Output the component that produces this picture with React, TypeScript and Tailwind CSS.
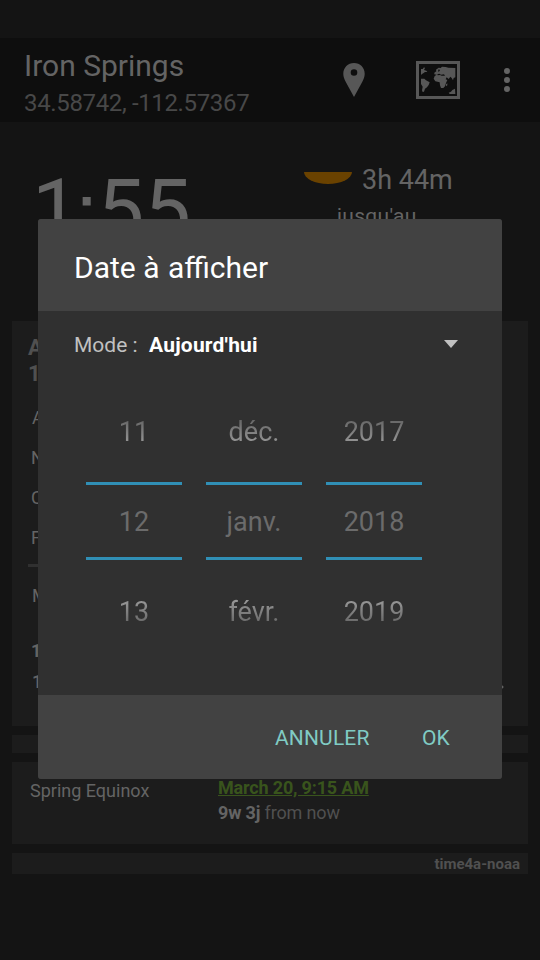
import type { ReactNode } from "react";

function PinIcon() {
  return (
    <svg className="h-[34px] w-[22px]" viewBox="0 0 22 34" fill="#575757">
      <path
        fillRule="evenodd"
        d="M11 0C4.9 0 0.3 4.7 0.3 10.8c0 3 1.1 5.600 2.500 8.200L11 34l8.200-15c1.400-2.600 2.500-5.200 2.500-8.200C21.700 4.700 17.100 0 11 0Zm0 6.200a3.300 3.300 0 1 1 0 6.600a3.300 3.300 0 0 1 0-6.600Z"
      />
    </svg>
  );
}

function MapIcon() {
  return (
    <svg className="h-[38px] w-[44px]" viewBox="0 0 132 114" fill="#575757">
      <path fillRule="evenodd" d="M0 0H132V114H0ZM9 9V105H123V9Z" />
      <path d="M15 24L20 24L24 19L27 21L24 27L31 29L34 33L27 33L22 37L18 39L15 42Z" />
      <path d="M15 53L25 53L30 58L41 64L38 72L33 79L27 83L24 92L20 93L18 88L20 77L15 69Z" />
      <path d="M55 35L61 31L60 26L68 20L74 21L78 17L89 18L97 20L118 21L118 49L113 51L111 58L107 51L103 47L98 54L92 49L89 55L94 57L90 66L87 76L82 81L75 81L72 73L71 64L58 61L53 53L56 45L62 41L55 40Z" />
      <path d="M90 70L94 67L94 73L90 76ZM98 95L105 92L109 87L117 83L118 99L101 99Z" />
      <path fill="#0e0e0e" d="M64 40L70 38L75 41L84 40L87 44L77 44L72 42L65 43ZM68 25L72 27L69 32L66 31Z" />
    </svg>
  );
}

function Row({ className = "", children }: { className?: string; children: ReactNode }) {
  return <div className={"whitespace-nowrap " + className}>{children}</div>;
}

function Picker({ values }: { values: [string, string, string] }) {
  return (
    <div className="flex w-24 flex-col text-center text-[27px] leading-[36px]">
      <div className="bg-linear-to-b from-[#5b5b5b] to-[#a5a5a5] bg-clip-text text-transparent">
        {values[0]}
      </div>
      <div className="mt-[32px] h-[78px] border-y-[3px] border-[#308fb5] pt-[19px] text-[#6b6b6b]">
        {values[1]}
      </div>
      <div className="mt-[34px] bg-linear-to-b from-[#a5a5a5] to-[#5b5b5b] bg-clip-text text-transparent">
        {values[2]}
      </div>
    </div>
  );
}

export default function App() {
  return (
    <div className="relative h-[960px] w-[540px] overflow-hidden bg-[#141414] font-[Roboto,sans-serif] text-[#646464]">
      <header className="mt-[38px] flex h-[84px] bg-[#0e0e0e] pl-6">
        <div className="w-[319px] pt-[10px]">
          <Row className="text-[30px] leading-[36px]">Iron Springs</Row>
          <Row className="mt-[4px] text-[24px] leading-[30px] tracking-[-0.35px] text-[#484848]">34.58742, -112.57367</Row>
        </div>
        <div className="pt-[25px]"><PinIcon /></div>
        <div className="ml-[51px] pt-[23px]"><MapIcon /></div>
        <div className="ml-[44px] flex flex-col gap-[3px] pt-[30px]">
          <i className="size-[6px] rounded-full bg-[#646464]" />
          <i className="size-[6px] rounded-full bg-[#646464]" />
          <i className="size-[6px] rounded-full bg-[#646464]" />
        </div>
      </header>

      <section className="flex h-[199px]">
        <div className="flex w-[304px] pt-[38px] pl-[32px] text-[84px] leading-[100px]">
          <span className="w-[43px]">1</span>
          <span className="w-[22px] pt-[2px] font-['Liberation_Sans',sans-serif]">:</span>
          <span className="tracking-[-0.4px]">55</span>
        </div>
        <div className="pt-[40px]">
          <div className="flex">
            <div className="mt-[10px] h-3 w-12 rounded-b-[50%_100%] bg-[#6a4200]" />
            <Row className="ml-[10px] text-[27px] leading-[36px]">3h 44m</Row>
          </div>
          <Row className="ml-[33px] text-[21px] leading-[36px] tracking-[0.3px]">jusqu'au</Row>
        </div>
      </section>

      <main className="flex flex-col gap-[9px] px-3">
        <section className="flex h-[405px] flex-col bg-[#1c1c1c] pl-4 text-[18px]">
          <Row className="mt-[14px] text-[22px] leading-[26px] font-bold text-[#505050]">A</Row>
          <Row className="text-[22px] leading-[26px] font-bold text-[#505050]">1</Row>
          <div className="mt-[11px] pl-1 leading-[40px]">
            <Row>A</Row>
            <Row className="-ml-px">N</Row>
            <Row className="-ml-px">C</Row>
            <Row className="-ml-px">F</Row>
          </div>
          <div className="mt-[6px] mr-8 h-[3px] shrink-0 bg-[#303030]" />
          <Row className="mt-[19px] pl-1 leading-[20px]">M</Row>
          <Row className="mt-[35px] pl-[3px] leading-[20px] font-bold">1</Row>
          <div className="mt-[11px] flex items-center justify-between pr-[25px] pl-1 leading-[20px] font-medium">
            <span>1</span>
            <i className="mt-[10px] size-[4px] rotate-45 bg-[#646464]" />
          </div>
        </section>
        <section className="h-[18px] bg-[#1c1c1c]" />
        <section className="flex h-[82px] bg-[#1c1c1c] pl-[18px] text-[18px]">
          <Row className="w-[188px] pt-[17px] leading-[24px]">Spring Equinox</Row>
          <div>
            <Row className="pt-[14px] leading-[24px] font-bold tracking-[-0.17px] text-[#39541c] underline">March 20, 9:15 AM</Row>
            <Row className="leading-[26px] tracking-[-0.15px] text-[#505050]"><b className="text-[#646464]">9w 3j</b> from now</Row>
          </div>
        </section>
        <section className="h-[21px] bg-[#1c1c1c] pr-2 text-right text-[15px] leading-[23px] font-bold text-[#505050]">time4a-noaa</section>
      </main>

      <div role="dialog" className="absolute top-[219px] left-[38px] flex h-[560px] w-[464px] flex-col overflow-hidden rounded-[3px] bg-[#303030]">
        <div className="h-[92px] bg-[#424242] pt-[31px] pl-9 text-[30px] leading-[36px] text-white">
          Date à <span className="-ml-px pl-[2px]">afficher</span>
        </div>
        <div className="flex h-[384px] flex-col px-9">
          <div className="flex pt-[20px] text-[21px] leading-[28px]">
            <Row className="w-[75px] text-[#c1c1c1]">Mode :</Row>
            <Row className="w-[295px] font-bold tracking-[0.2px] text-white">Aujourd'hui</Row>
            <svg className="mt-[9px] h-2 w-[14px]" viewBox="0 0 14 8"><path d="M0 0H14L7 8Z" fill="#c1c1c1" /></svg>
          </div>
          <div className="mt-[55px] flex gap-6 pl-3">
            <Picker values={["11", "12", "13"]} />
            <Picker values={["déc.", "janv.", "févr."]} />
            <Picker values={["2017", "2018", "2019"]} />
          </div>
        </div>
        <div className="flex h-[84px] bg-[#424242] pt-[28px] pl-[237px] text-[21px] leading-[30px] text-[#80cbc4]">
          <span className="w-[147px] tracking-[0.15px]">ANNULER</span>
          <span>OK</span>
        </div>
      </div>
    </div>
  );
}
